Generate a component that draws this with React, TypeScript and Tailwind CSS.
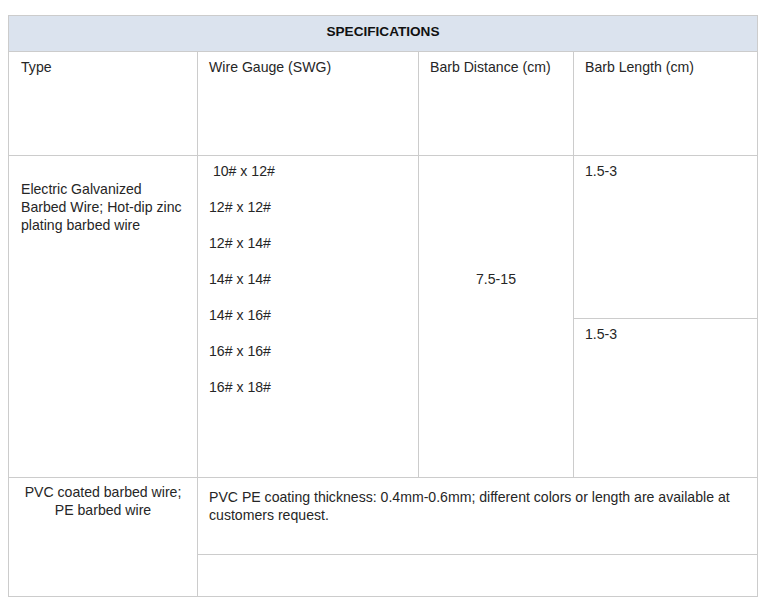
import React from "react";

const cell = "bg-white text-[14.1px] leading-[18px] text-[#262626]";

export default function App() {
  const gauges = [" 10# x 12#", "12# x 12#", "12# x 14#", "14# x 14#", "14# x 16#", "16# x 16#", "16# x 18#"];
  return (
    <div className="w-[777px] h-[603px] bg-white pt-[15px] pl-[8px]" style={{ fontFamily: '"Liberation Sans", Arial, sans-serif' }}>
      <div className="grid w-[750px] grid-cols-[188px_220px_154px_183px] grid-rows-[35px_103px_162px_158px_76px_41px] gap-px bg-[#cccccc] p-px">
        <div className="col-span-4 flex items-center justify-center bg-[#dbe3ee] pb-[3px] text-[13.6px] font-bold text-[#111]">
          SPECIFICATIONS
        </div>
        <div className={`${cell} pl-[12px] pt-[6px]`}>Type</div>
        <div className={`${cell} pl-[11px] pt-[6px]`}>Wire Gauge (SWG)</div>
        <div className={`${cell} pl-[11px] pt-[6px]`}>Barb Distance (cm)</div>
        <div className={`${cell} pl-[11px] pt-[6px]`}>Barb Length (cm)</div>

        <div className={`${cell} row-span-2 pl-[12px] pr-[12px] pt-[24px]`}>
          Electric Galvanized Barbed Wire; Hot-dip zinc plating barbed wire
        </div>
        <div className={`${cell} row-span-2 flex flex-col gap-[18px] pl-[11px] pt-[6px] whitespace-pre`}>
          {gauges.map((g) => (
            <div key={g}>{g}</div>
          ))}
        </div>
        <div className={`${cell} row-span-2 pt-[114px] text-center`}>7.5-15</div>
        <div className={`${cell} pl-[11px] pt-[6px]`}>1.5-3</div>
        <div className={`${cell} pl-[11px] pt-[6px]`}>1.5-3</div>

        <div className={`${cell} row-span-2 px-[8px] pt-[5px] text-center`}>
          PVC coated barbed wire;
          <br />
          PE barbed wire
        </div>
        <div className={`${cell} col-span-3 pl-[11px] pr-[11px] pt-[10px]`}>
          PVC PE coating thickness: 0.4mm-0.6mm; different colors or length are available at customers request.
        </div>
        <div className={`${cell} col-span-3`}></div>
      </div>
    </div>
  );
}
